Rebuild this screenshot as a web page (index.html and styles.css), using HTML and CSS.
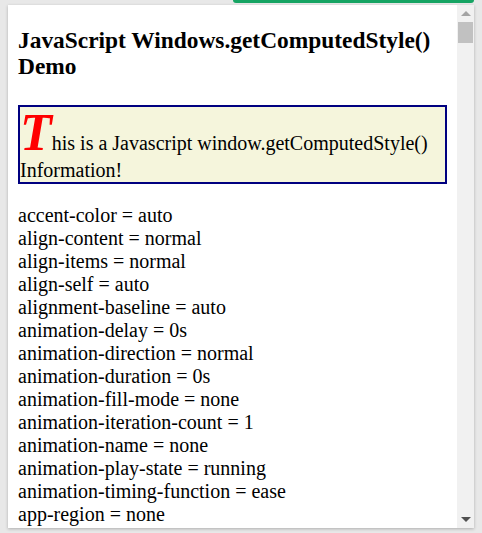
FILE: index.html
```html
<!DOCTYPE html>
<html>
<head>
<meta charset="utf-8">
<link rel="stylesheet" href="styles.css">
</head>
<body>
<div class="topbar"><div class="greenbar"></div></div>
<div class="panel">
  <div class="content">
    <h2 class="title">JavaScript Windows.getComputedStyle() Demo</h2>
    <p class="info"><span class="cap">T</span>his is a Javascript window.getComputedStyle() Information!</p>
    <div class="props">
      <div>accent-color = auto</div>
      <div>align-content = normal</div>
      <div>align-items = normal</div>
      <div>align-self = auto</div>
      <div>alignment-baseline = auto</div>
      <div>animation-delay = 0s</div>
      <div>animation-direction = normal</div>
      <div>animation-duration = 0s</div>
      <div>animation-fill-mode = none</div>
      <div>animation-iteration-count = 1</div>
      <div>animation-name = none</div>
      <div>animation-play-state = running</div>
      <div>animation-timing-function = ease</div>
      <div>app-region = none</div>
      <div>appearance = none</div>
    </div>
  </div>
  <div class="scrollbar">
    <div class="arrow up"></div>
    <div class="thumb"></div>
    <div class="track"></div>
    <div class="arrow down"></div>
  </div>
</div>
</body>
</html>
```
FILE: styles.css
```css
html, body {
  margin: 0;
  padding: 0;
  background: #e8e8e8;
  height: 533px;
  overflow: hidden;
}
.topbar {
  height: 5px;
  display: flex;
  justify-content: flex-end;
  padding-right: 8px;
}
.greenbar {
  width: 241px;
  height: 3px;
  background: #16a463;
  border-radius: 0 0 4px 4px;
}
.panel {
  margin-left: 8px;
  width: 466px;
  height: 523px;
  background: #fff;
  display: flex;
  box-shadow: 0 1px 3px rgba(0,0,0,0.25);
  overflow: hidden;
}
.content {
  flex: 1;
  padding: 0 0 0 10px;
  font-family: "Liberation Serif", "Times New Roman", serif;
  font-size: 20px;
  color: #000;
  overflow: hidden;
}
.title {
  font-size: 23.4px;
  font-weight: bold;
  margin: 22px 0 26px;
  line-height: 26px;
}
.info {
  margin: 0 10px 0 0;
  background: #f5f5dc;
  border: 2px solid #000080;
  line-height: 23px;
}
.cap {
  color: #f00;
  font-style: italic;
  font-weight: bold;
  font-size: 52px;
  line-height: 52px;
}
.props {
  margin-top: 20px;
  line-height: 23px;
}
.scrollbar {
  width: 17px;
  background: #f1f1f1;
  display: flex;
  flex-direction: column;
  align-items: center;
}
.arrow {
  width: 0;
  height: 0;
  border-left: 5px solid transparent;
  border-right: 5px solid transparent;
  margin: 6px 0;
}
.arrow.up {
  border-bottom: 5px solid #a3a3a3;
}
.arrow.down {
  border-top: 5px solid #505050;
}
.thumb {
  width: 15px;
  height: 21px;
  background: #c1c1c1;
}
.track {
  flex: 1;
}
```
